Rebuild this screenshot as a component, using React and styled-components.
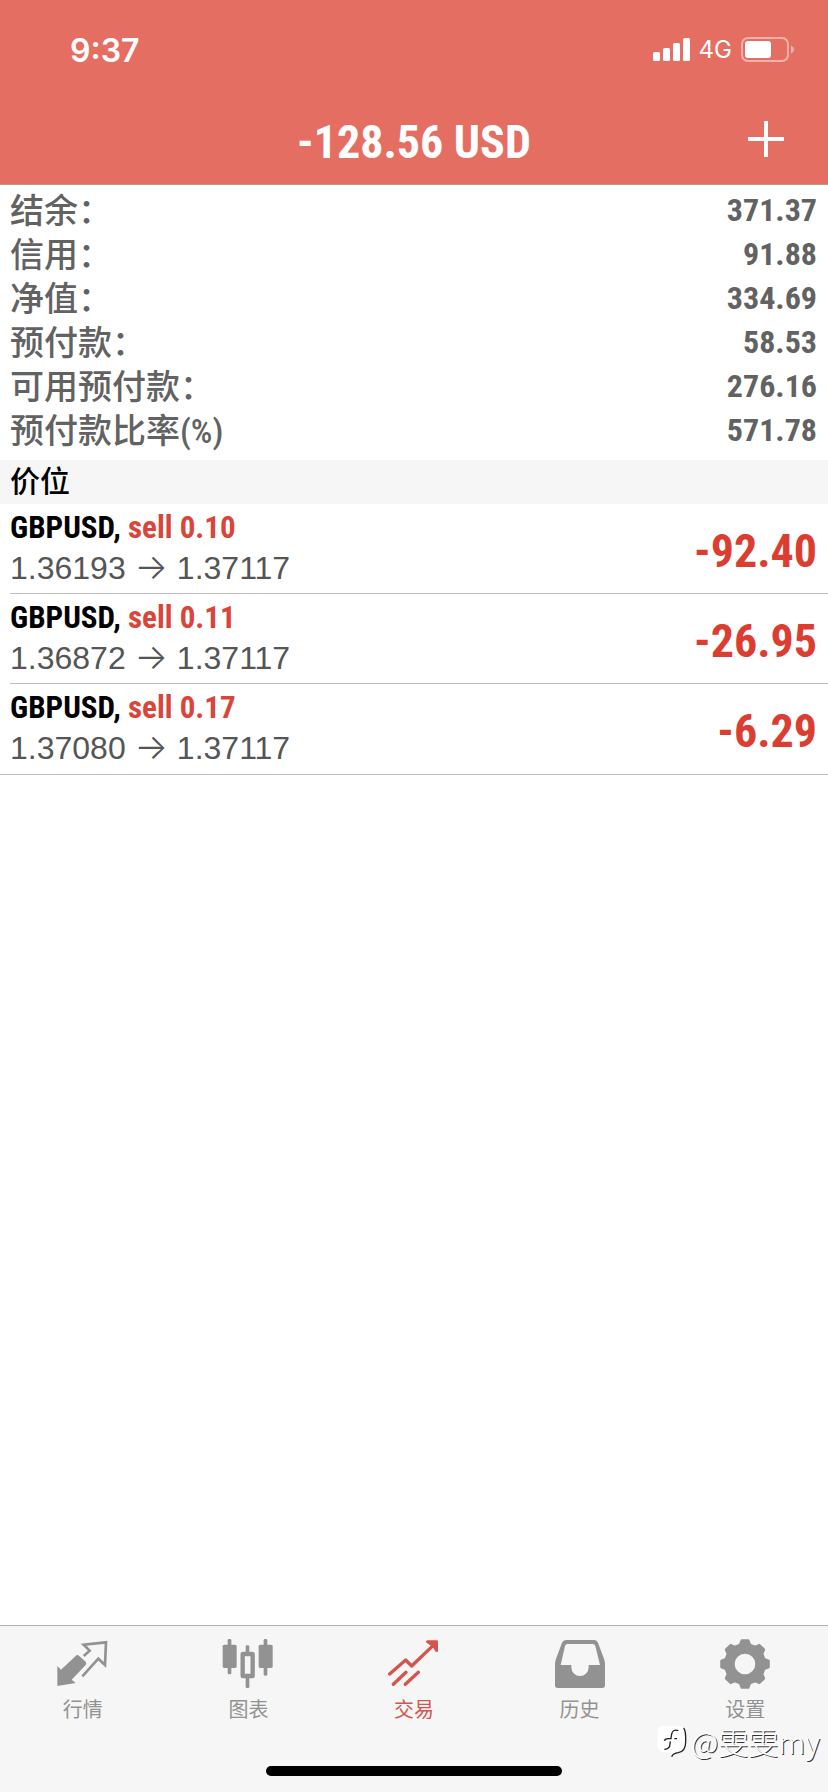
import React from "react";
import styled, { createGlobalStyle } from "styled-components";

const narrow = `"Roboto Condensed", "Liberation Sans", sans-serif`;
const cjk = `"Roboto Condensed", "Noto Sans CJK SC", sans-serif`;

const GlobalStyle = createGlobalStyle`
  * { box-sizing: border-box; }
  body { margin: 0; background: #fff; font-family: ${cjk}; }
  button { border: 0; padding: 0; background: none; font: inherit; color: inherit; cursor: pointer; }
  dl, dd, dt, ul, h1, h2, p { margin: 0; padding: 0; }
  svg { display: block; }
`;

const Screen = styled.div`
  min-height: 100vh;
  display: flex;
  flex-direction: column;
`;

const Header = styled.header`
  background: #e56e62;
  color: #fff;
  border-bottom: 1px solid #d98c84;
`;

const StatusBar = styled.div`
  height: 100px;
  padding: 0 34px 0 70px;
  display: flex;
  align-items: center;
  justify-content: space-between;
  font-family: Inter, sans-serif;
`;

const Clock = styled.time`
  font-size: 32px;
  font-weight: 600;
`;

const StatusIcons = styled.div`
  display: flex;
  align-items: center;
  gap: 9px;
`;

const Network = styled.span`
  font-size: 24px;
  line-height: 24px;
`;

const TitleBar = styled.div`
  height: 84px;
  padding: 0 44px;
  display: grid;
  grid-template-columns: 36px 1fr 36px;
  align-items: center;
`;

const Title = styled.h1`
  grid-column: 2;
  text-align: center;
  font: bold 46px/56px ${narrow};
`;

const AddButton = styled.button`
  width: 36px;
  height: 36px;
  margin-bottom: 6px;
`;

const Summary = styled.dl`
  padding: 4px 11px 7px 10px;
  color: #626262;
`;

const SummaryRow = styled.div`
  height: 44px;
  display: flex;
  align-items: center;
  justify-content: space-between;
`;

const Label = styled.dt`
  font-size: 34px;
  line-height: 44px;
  font-weight: 500;
`;

const Value = styled.dd`
  font: bold 32px/42px ${narrow};
  padding-bottom: 2px;
`;

const SectionTitle = styled.h2`
  padding: 0 10px;
  background: #f6f6f6;
  font-size: 30px;
  line-height: 44px;
  font-weight: 500;
  color: #000;
`;

const Positions = styled.ul`
  list-style: none;
  border-bottom: 1px solid #bfbfc2;
`;

const Position = styled.li`
  height: 90px;
  margin-left: 10px;
  padding-right: 11px;
  display: flex;
  align-items: center;
  justify-content: space-between;
  border-bottom: 1px solid #bfbfc2;
  &:last-child { border-bottom-color: transparent; }
`;

const Details = styled.div`
  padding-bottom: 2px;
`;

const Symbol = styled.p`
  font: bold 31px/40px ${narrow};
  color: #000;
`;

const Side = styled.span`
  color: #d9453a;
`;

const Prices = styled.p`
  font: 32px/40px "Liberation Sans", sans-serif;
  color: #555;
`;

const Arrow = styled.span`
  font-family: Inter, sans-serif;
  font-size: 35px;
  font-weight: 300;
  line-height: 20px;
`;

const Profit = styled.span`
  padding-top: 4px;
  font: bold 46px/56px ${narrow};
  color: #dc3d31;
`;

const Footer = styled.footer`
  position: relative;
  height: 167px;
  margin-top: auto;
  display: flex;
  flex-direction: column;
  justify-content: space-between;
  align-items: center;
  padding: 12px 0 16px;
  background: #f6f6f6;
  border-top: 1px solid #b2b2b2;
`;

const Tabs = styled.nav`
  width: 100%;
  display: grid;
  grid-template-columns: repeat(5, 1fr);
`;

const Tab = styled.button`
  display: flex;
  flex-direction: column;
  align-items: center;
  gap: 6px;
  color: ${(p) => (p.$active ? "#d4554b" : "#929292")};
  font-size: 20px;
  line-height: 28px;
`;

const HomeIndicator = styled.div`
  width: 296px;
  height: 10px;
  border-radius: 5px;
  background: #000;
`;

const Watermark = styled.div`
  position: absolute;
  right: 8px;
  top: 98px;
  display: flex;
  align-items: center;
  gap: 4px;
  color: #fff;
  font-family: "Noto Sans CJK SC", sans-serif;
  font-size: 30px;
  line-height: 32px;
  font-weight: 300;
  text-shadow: 1px 1px 0 #333;
`;

const gearPath = (() => {
  const at = (deg, r) => {
    const a = (deg * Math.PI) / 180;
    return `${(78 + r * Math.cos(a)).toFixed(1)} ${(78 + r * Math.sin(a)).toFixed(1)}`;
  };
  let d = "";
  for (let i = 0; i < 8; i++) {
    const c = i * 45;
    d += `${i ? "L" : "M"}${at(c - 15, 60)}L${at(c - 8, 72)}L${at(c + 8, 72)}L${at(c + 15, 60)}`;
  }
  return `${d}ZM112 78a34 34 0 1 0-68 0a34 34 0 1 0 68 0Z`;
})();

const Icon = ({ children }) => (
  <svg width="52" height="52" viewBox="0 0 156 156" fill="currentColor" aria-hidden="true">
    {children}
  </svg>
);

const QuotesIcon = () => (
  <Icon>
    <path d="M1 84L12 95L56 54Q61 49 66 53L86 71Q90 76 86 81L44 125L56 135L1 144Z" />
    <path d="M80 54L98 38L80 20L147 13L144 81L124 62L76 115" fill="none" stroke="currentColor" strokeWidth="8" />
  </Icon>
);

const ChartIcon = () => (
  <Icon>
    <rect x="2" y="20" width="42" height="70" rx="5" />
    <rect x="17" y="3" width="11" height="106" rx="4" />
    <rect x="62" y="48" width="30" height="66" rx="1" fill="none" stroke="currentColor" strokeWidth="13" strokeLinejoin="round" />
    <rect x="71" y="22" width="11" height="24" rx="4" />
    <rect x="71" y="116" width="11" height="34" rx="4" />
    <rect x="110" y="20" width="42" height="70" rx="5" />
    <rect x="125" y="3" width="11" height="110" rx="4" />
  </Icon>
);

const TradeIcon = () => (
  <Icon>
    <g fill="none" stroke="currentColor" strokeWidth="10" strokeLinecap="round" strokeLinejoin="round">
      <path d="M5 108L53 66L71 84L142 16M16 139L54 103M52 139L91 103" />
      <path d="M118 11H146V38L138 26L130 19Z" fill="currentColor" strokeWidth="8" />
    </g>
  </Icon>
);

const HistoryIcon = () => (
  <Icon>
    <path
      fillRule="evenodd"
      d="M36 6H121Q129 6 132 14L150 62Q153 70 153 79V142Q153 150 145 150H11Q3 150 3 142V79Q3 70 6 62L24 14Q27 6 36 6ZM40 18Q35 18 33 24L20 81H52V88A26 26 0 0 0 104 88V81H138L124 24Q122 18 117 18Z"
    />
  </Icon>
);

const SettingsIcon = () => (
  <Icon>
    <path d={gearPath} fillRule="evenodd" stroke="currentColor" strokeWidth="6" strokeLinejoin="round" />
  </Icon>
);

const SignalIcon = () => (
  <svg width="37" height="24" viewBox="0 0 37 24" fill="#fff" aria-hidden="true">
    <rect x="0" y="14" width="7" height="9" rx="1.5" />
    <rect x="10" y="10" width="7" height="13" rx="1.5" />
    <rect x="20" y="5" width="7" height="18" rx="1.5" />
    <rect x="30" y="0" width="7" height="23" rx="1.5" />
  </svg>
);

const BatteryIcon = () => (
  <svg width="53" height="26" viewBox="0 0 53 26" aria-hidden="true">
    <rect x="1" y="1" width="46" height="23" rx="6" fill="none" stroke="#f3b1aa" strokeWidth="2" />
    <rect x="4" y="4" width="26" height="17" rx="3" fill="#fff" />
    <path d="M50 8.500Q53 10 53 12.500Q53 15 50 16.500Z" fill="#f3b1aa" />
  </svg>
);

const WatermarkLogo = () => (
  <svg width="30" height="34" viewBox="0 0 90 102" fill="none" aria-hidden="true">
    <path d="M18 6H66Q82 6 84 24V62Q82 80 62 84L42 96L44 84H18Q2 82 2 66V22Q2 6 18 6Z" fill="#fff" />
    <path
      d="M80 12Q87 20 86 54Q86 82 64 86Q48 88 44 98M64 20Q48 14 44 30L42 42M22 50Q24 44 34 44H44M52 44H60M40 52L38 66Q34 76 22 76"
      stroke="#222"
      strokeWidth="4"
    />
  </svg>
);

const summary = [
  ["结余：", "371.37"],
  ["信用：", "91.88"],
  ["净值：", "334.69"],
  ["预付款：", "58.53"],
  ["可用预付款：", "276.16"],
  ["预付款比率(%)", "571.78"],
];

const positions = [
  { volume: "0.10", open: "1.36193", current: "1.37117", profit: "-92.40" },
  { volume: "0.11", open: "1.36872", current: "1.37117", profit: "-26.95" },
  { volume: "0.17", open: "1.37080", current: "1.37117", profit: "-6.29" },
];

const tabs = [
  { label: "行情", Glyph: QuotesIcon },
  { label: "图表", Glyph: ChartIcon },
  { label: "交易", Glyph: TradeIcon, active: true },
  { label: "历史", Glyph: HistoryIcon },
  { label: "设置", Glyph: SettingsIcon },
];

export default function App() {
  return (
    <Screen>
      <GlobalStyle />
      <Header>
        <StatusBar>
          <Clock>9:37</Clock>
          <StatusIcons>
            <SignalIcon />
            <Network>4G</Network>
            <BatteryIcon />
          </StatusIcons>
        </StatusBar>
        <TitleBar>
          <Title>-128.56 USD</Title>
          <AddButton type="button" aria-label="+">
            <svg width="36" height="36" viewBox="0 0 36 36" stroke="#fff" strokeWidth="4">
              <path d="M18 0V36M0 18H36" />
            </svg>
          </AddButton>
        </TitleBar>
      </Header>
      <main>
        <Summary>
          {summary.map(([label, value]) => (
            <SummaryRow key={label}>
              <Label>{label}</Label>
              <Value>{value}</Value>
            </SummaryRow>
          ))}
        </Summary>
        <SectionTitle>价位</SectionTitle>
        <Positions>
          {positions.map((p) => (
            <Position key={p.open}>
              <Details>
                <Symbol>
                  GBPUSD, <Side>sell {p.volume}</Side>
                </Symbol>
                <Prices>
                  {p.open} <Arrow>→</Arrow> {p.current}
                </Prices>
              </Details>
              <Profit>{p.profit}</Profit>
            </Position>
          ))}
        </Positions>
      </main>
      <Footer>
        <Tabs>
          {tabs.map(({ label, Glyph, active }) => (
            <Tab key={label} type="button" $active={active} aria-current={active ? "page" : undefined}>
              <Glyph />
              {label}
            </Tab>
          ))}
        </Tabs>
        <HomeIndicator />
        <Watermark>
          <WatermarkLogo />
          <span>@雯雯my</span>
        </Watermark>
      </Footer>
    </Screen>
  );
}
